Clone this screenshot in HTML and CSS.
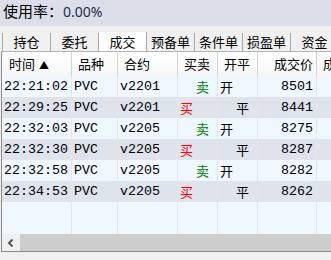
FILE: index.html
```html
<html>
  <head>
    <title>成交</title>
    <link rel="stylesheet" href="styles.css">
  </head>
  <body>
    <div class="usage">使用率：<span class="usage-val">0.00%</span></div>

    <div class="tabs">
      <div class="tab">持仓</div>
      <div class="tab">委托</div>
      <div class="tab active">成交</div>
      <div class="tab">预备单</div>
      <div class="tab">条件单</div>
      <div class="tab">损盈单</div>
      <div class="tab">资金</div>
    </div>

    <div class="frame">
      <div class="row head">
        <div class="cell">时间 <span class="sort">▲</span></div>
        <div class="cell">品种</div>
        <div class="cell">合约</div>
        <div class="cell">买卖</div>
        <div class="cell">开平</div>
        <div class="cell num">成交价</div>
        <div class="cell">成</div>
      </div>

      <div class="row">
        <div class="cell">22:21:02</div><div class="cell">PVC</div><div class="cell">v2201</div>
        <div class="cell sell">卖</div><div class="cell">开</div><div class="cell num">8501</div><div class="cell"></div>
      </div>
      <div class="row alt">
        <div class="cell">22:29:25</div><div class="cell">PVC</div><div class="cell">v2201</div>
        <div class="cell buy">买</div><div class="cell close">平</div><div class="cell num">8441</div><div class="cell"></div>
      </div>
      <div class="row">
        <div class="cell">22:32:03</div><div class="cell">PVC</div><div class="cell">v2205</div>
        <div class="cell sell">卖</div><div class="cell">开</div><div class="cell num">8275</div><div class="cell"></div>
      </div>
      <div class="row alt">
        <div class="cell">22:32:30</div><div class="cell">PVC</div><div class="cell">v2205</div>
        <div class="cell buy">买</div><div class="cell close">平</div><div class="cell num">8287</div><div class="cell"></div>
      </div>
      <div class="row">
        <div class="cell">22:32:58</div><div class="cell">PVC</div><div class="cell">v2205</div>
        <div class="cell sell">卖</div><div class="cell">开</div><div class="cell num">8282</div><div class="cell"></div>
      </div>
      <div class="row alt">
        <div class="cell">22:34:53</div><div class="cell">PVC</div><div class="cell">v2205</div>
        <div class="cell buy">买</div><div class="cell close">平</div><div class="cell num">8262</div><div class="cell"></div>
      </div>
      <div class="row">
        <div class="cell"></div><div class="cell"></div><div class="cell"></div>
        <div class="cell"></div><div class="cell"></div><div class="cell"></div><div class="cell"></div>
      </div>
      <div class="row short">
        <div class="cell"></div><div class="cell"></div><div class="cell"></div>
        <div class="cell"></div><div class="cell"></div><div class="cell"></div><div class="cell"></div>
      </div>

      <div class="hscroll">
        <div class="arrow">
          <svg width="10" height="10" viewBox="0 0 10 10"><path d="M6.5 1.5 L3 5 L6.5 8.5" fill="none" stroke="#555" stroke-width="2"/></svg>
        </div>
        <div class="thumb"></div>
      </div>
    </div>
  </body>
</html>
```

FILE: styles.css
```css
body {
    margin: 0;
    padding: 0;
    background: #f0f0f0;
    width: 331px;
    height: 260px;
    overflow: hidden;
    font-family: "Noto Sans CJK SC", "Noto Sans", sans-serif;
}

.usage {
    height: 26px;
    line-height: 22px;
    background: #dcdfe9;
    padding-left: 3px;
    font-size: 15px;
    color: #000;
}
.usage-val {
    font-family: "Noto Sans", sans-serif;
    font-size: 14px;
    color: #1d2b4f;
}

.tabs {
    display: flex;
    margin-top: 7px;
    margin-left: 2px;
    height: 18px;
    border-left: 1px solid #a8a8a8;
    width: 400px;
}
.tab {
    flex: 0 0 47px;
    border-right: 1px solid #a8a8a8;
    text-align: center;
    font-size: 13px;
    line-height: 18px;
    color: #000;
}
.tab.active {
    background: #fff;
    margin-top: -1px;
    height: 19px;
    line-height: 20px;
}

.frame {
    margin-left: 1px;
    width: 400px;
    height: 199px;
    border-left: 1px solid #8a8a8a;
    border-top: 1px solid #b4b4b4;
    border-bottom: 1px solid #8a8a8a;
    background: #eef6ff;
    overflow: hidden;
}

.row {
    display: grid;
    grid-template-columns: 70px 46px 60px 40px 40px 59px 60px;
    height: 21px;
    background: #eff7ff;
    font-family: "Liberation Mono", "Noto Sans CJK SC", monospace;
    font-size: 13.33px;
    line-height: 21px;
    color: #000;
}
.row.alt {
    background: #dee3ec;
}
.row.short {
    height: 11px;
}
.row .cell {
    border-right: 1px solid #e6e6e6;
    padding-left: 2px;
    white-space: nowrap;
    overflow: hidden;
}
.row .cell:nth-child(4),
.row .cell:nth-child(5) {
    font-family: "Noto Sans CJK SC", sans-serif;
    font-size: 13px;
}
.row .cell.num {
    text-align: right;
    padding-right: 3px;
    padding-left: 0;
}

.buy { color: #ff0000; }
.sell { color: #008000; padding-left: 18px !important; }
.close { padding-left: 18px !important; }

.row.head {
    height: 24px;
    line-height: 23px;
    background: linear-gradient(#ffffff, #f5f6f7);
    font-family: "Noto Sans CJK SC", sans-serif;
    font-size: 13px;
}
.row.head .cell {
    border-right: 1px solid #d5d5d5;
    padding-left: 6px;
}
.row.head .cell:first-child {
    padding-left: 7px;
}
.row.head .cell.num {
    padding-left: 0;
    padding-right: 3px;
}
.sort {
    font-size: 10px;
    margin-left: 1px;
}

.hscroll {
    display: flex;
    height: 17px;
    background: #f0f0f0;
}
.arrow {
    width: 18px;
    display: flex;
    align-items: center;
    justify-content: center;
}
.thumb {
    flex: 1;
    background: #cdcdcd;
}
```
